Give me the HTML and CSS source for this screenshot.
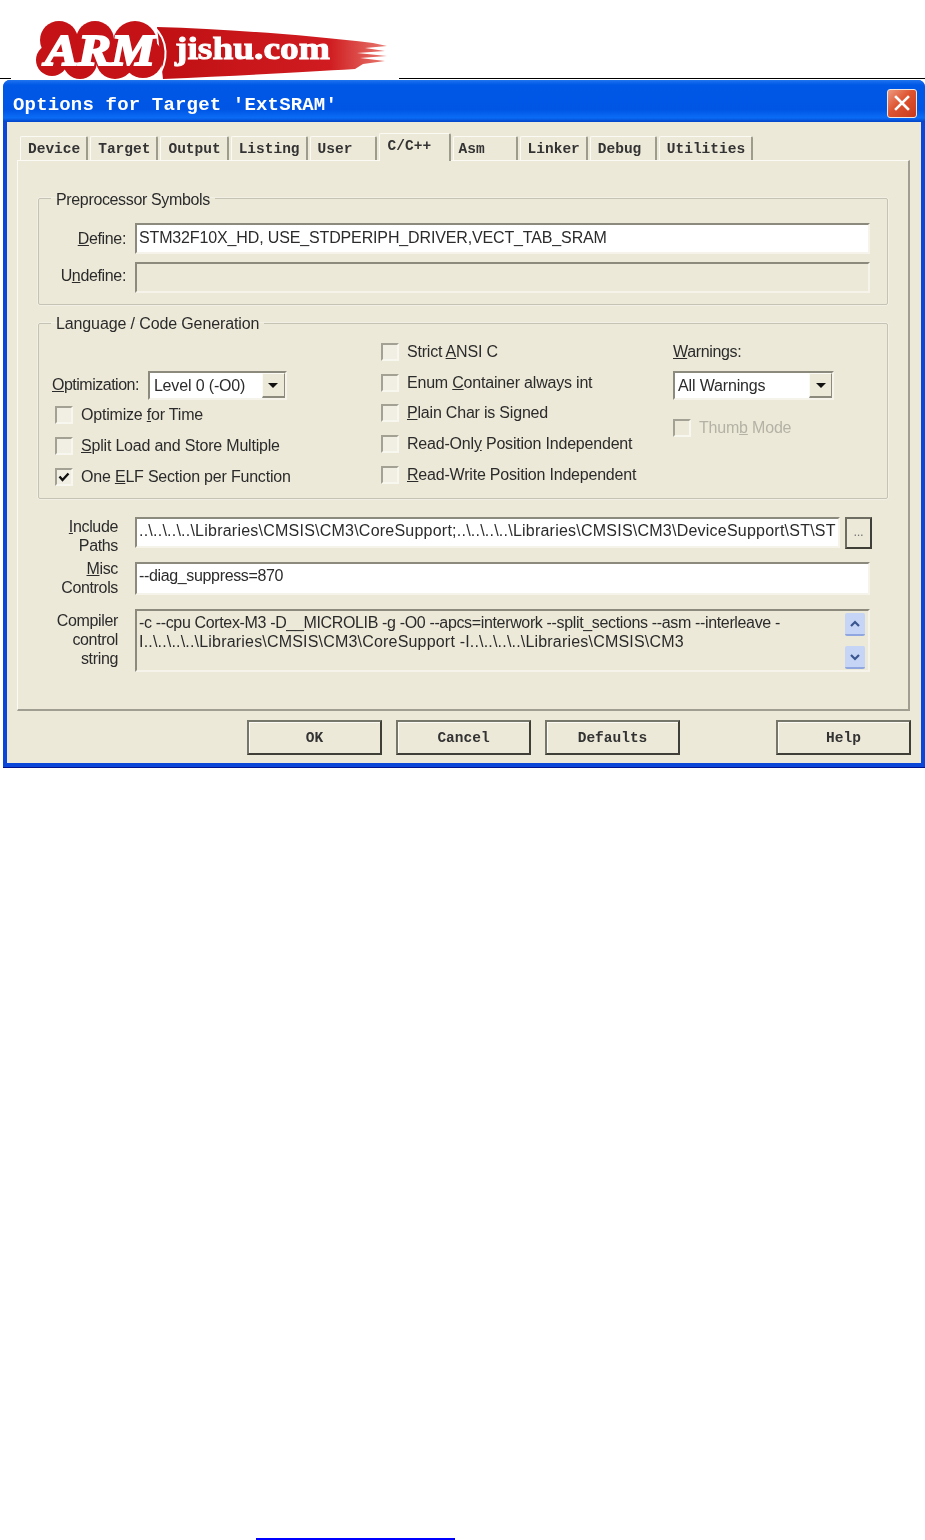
FILE: index.html
```html
<!DOCTYPE html>
<html lang="en">
<head>
    <meta charset="UTF-8">
    <title>Options for Target 'ExtSRAM'</title>
    <link rel="stylesheet" href="styles.css">
</head>
<body>
    <header class="page-head">
        <div class="rule rule-left"></div>
        <div class="logo-cell">
            <svg class="logo" width="353" height="59" viewBox="0 0 353 59">
                <defs>
                    <linearGradient id="swoosh" x1="0" y1="0" x2="1" y2="0">
                        <stop offset="0" stop-color="#c01014"/>
                        <stop offset="0.75" stop-color="#d01c20"/>
                        <stop offset="1" stop-color="#e87a70"/>
                    </linearGradient>
                </defs>
                <path d="M122 7 C190 9 270 15 338 23 L352 26 L330 28 L350 31 L322 33 L352 36 L325 38 L350 41 L328 44 L320 49 C270 52 200 56 128 59 Z" fill="url(#swoosh)"/>
                <g fill="#c41216">
                    <circle cx="24" cy="20" r="19"/>
                    <circle cx="17" cy="40" r="16"/>
                    <circle cx="60" cy="20" r="19"/>
                    <circle cx="100" cy="23" r="22"/>
                    <circle cx="45" cy="42" r="17"/>
                    <circle cx="80" cy="40" r="19"/>
                    <circle cx="108" cy="38" r="20"/>
                </g>
                <path d="M118 6 C134 20 134 42 122 58" fill="none" stroke="#fff" stroke-width="2"/>
                <text class="logo-arm" x="10" y="45" textLength="110" lengthAdjust="spacingAndGlyphs">ARM</text>
                <text class="logo-site" x="140" y="39" textLength="155" lengthAdjust="spacingAndGlyphs">jishu.com</text>
            </svg>
        </div>
        <div class="rule rule-right"></div>
    </header>

    <section class="dialog">
        <div class="titlebar">
            <span class="title">Options for Target 'ExtSRAM'</span>
            <span class="close">
                <svg width="16" height="16" viewBox="0 0 16 16"><path d="M2 2 L14 14 M14 2 L2 14" stroke="#fff" stroke-width="2.6" stroke-linecap="square"/></svg>
            </span>
        </div>

        <div class="dialog-body">
            <nav class="tabs">
                <span class="tab">Device</span>
                <span class="tab">Target</span>
                <span class="tab">Output</span>
                <span class="tab">Listing</span>
                <span class="tab">User</span>
                <span class="tab tab-active">C/C++</span>
                <span class="tab tab-asm">Asm</span>
                <span class="tab">Linker</span>
                <span class="tab">Debug</span>
                <span class="tab">Utilities</span>
            </nav>

            <div class="panel">
                <fieldset class="group">
                    <legend>Preprocessor Symbols</legend>
                    <div class="symbols">
                        <label class="sym-label"><u>D</u>efine:</label>
                        <div class="field field-define">STM32F10X_HD, USE_STDPERIPH_DRIVER,VECT_TAB_SRAM</div>
                        <label class="sym-label label-up">U<u>n</u>define:</label>
                        <div class="field field-off"></div>
                    </div>
                </fieldset>

                <fieldset class="group group-lang">
                    <legend>Language / Code Generation</legend>
                    <div class="lang">
                        <div class="lang-col col-opt">
                            <div class="opt-row">
                                <label><u>O</u>ptimization:</label>
                                <div class="combo combo-opt">
                                    <span class="combo-text">Level 0 (-O0)</span>
                                    <span class="combo-btn"><i></i></span>
                                </div>
                            </div>
                            <div class="check"><span class="box"></span><span>Optimize <u>f</u>or Time</span></div>
                            <div class="check"><span class="box"></span><span><u>S</u>plit Load and Store Multiple</span></div>
                            <div class="check">
                                <span class="box"><svg width="12" height="12" viewBox="0 0 12 12"><path d="M1.5 5.5 L4.5 9 L10.5 2.5" fill="none" stroke="#111" stroke-width="2.4"/></svg></span>
                                <span>One <u>E</u>LF Section per Function</span>
                            </div>
                        </div>
                        <div class="lang-col col-flags">
                            <div class="check"><span class="box"></span><span>Strict <u>A</u>NSI C</span></div>
                            <div class="check"><span class="box"></span><span>Enum <u>C</u>ontainer always int</span></div>
                            <div class="check"><span class="box"></span><span><u>P</u>lain Char is Signed</span></div>
                            <div class="check"><span class="box"></span><span>Read-Onl<u>y</u> Position Independent</span></div>
                            <div class="check"><span class="box"></span><span><u>R</u>ead-Write Position Independent</span></div>
                        </div>
                        <div class="lang-col col-warn">
                            <label class="warn-label"><u>W</u>arnings:</label>
                            <div class="combo combo-warn">
                                <span class="combo-text">All Warnings</span>
                                <span class="combo-btn"><i></i></span>
                            </div>
                            <div class="check check-off"><span class="box"></span><span>Thum<u>b</u> Mode</span></div>
                        </div>
                    </div>
                </fieldset>

                <div class="rows">
                    <label class="row-label label-low"><u>I</u>nclude<br>Paths</label>
                    <div class="include-row">
                        <div class="field field-clip">..\..\..\..\Libraries\CMSIS\CM3\CoreSupport;..\..\..\..\Libraries\CMSIS\CM3\DeviceSupport\ST\ST</div>
                        <span class="dots">...</span>
                    </div>
                    <label class="row-label"><u>M</u>isc<br>Controls</label>
                    <div class="field field-misc">--diag_suppress=870</div>
                    <label class="row-label">Compiler<br>control<br>string</label>
                    <div class="field field-off field-string">
                        <div class="string-text">-c --cpu Cortex-M3 -D__MICROLIB -g -O0 --apcs=interwork --split_sections --asm --interleave -<br><span class="string-wide">I..\..\..\..\Libraries\CMSIS\CM3\CoreSupport -I..\..\..\..\Libraries\CMSIS\CM3</span></div>
                        <div class="scroll">
                            <span class="scroll-btn"><svg width="12" height="10" viewBox="0 0 12 10"><path d="M2 7 L6 3 L10 7" fill="none" stroke="#3a5590" stroke-width="2.2"/></svg></span>
                            <span class="scroll-btn"><svg width="12" height="10" viewBox="0 0 12 10"><path d="M2 3 L6 7 L10 3" fill="none" stroke="#3a5590" stroke-width="2.2"/></svg></span>
                        </div>
                    </div>
                </div>
            </div>

            <div class="actions">
                <button>OK</button>
                <button>Cancel</button>
                <button>Defaults</button>
                <button class="help">Help</button>
            </div>
        </div>
    </section>

    <footer class="page-foot"><a class="foot-link"></a></footer>
</body>
</html>
```

FILE: styles.css
```css
* {
    box-sizing: border-box;
}
html, body {
    margin: 0;
    background: #fff;
}
body {
    width: 925px;
    height: 1540px;
    overflow: hidden;
    display: flex;
    flex-direction: column;
    font-family: "Liberation Sans", Arial, sans-serif;
    font-size: 16px;
    letter-spacing: -0.35px;
    color: #2b2b2b;
}

/* page header */
.page-head {
    display: flex;
    height: 80px;
    flex: none;
}
.rule {
    height: 79px;
    border-bottom: 1px solid #000;
}
.rule-left {
    width: 11px;
}
.rule-right {
    flex: 1;
}
.logo-cell {
    width: 388px;
    padding: 20px 0 0 24px;
}
.logo {
    display: block;
    filter: blur(0.5px);
}
.logo-arm {
    font-family: "Liberation Serif", serif;
    font-weight: bold;
    font-style: italic;
    font-size: 44px;
    letter-spacing: 0;
    fill: #fff;
    stroke: #fff;
    stroke-width: 2px;
}
.logo-site {
    font-family: "Liberation Serif", serif;
    font-weight: bold;
    font-size: 31px;
    letter-spacing: 0;
    fill: #fff;
    stroke: #fff;
    stroke-width: 0.9px;
}

/* dialog */
.dialog {
    margin-left: 3px;
    width: 922px;
    height: 688px;
    flex: none;
    display: flex;
    flex-direction: column;
    background: #0a46d8;
    border-radius: 7px 7px 0 0;
    padding: 0 4px 4px;
    filter: blur(0.6px);
    border-bottom: 1px solid #00138c;
}
.titlebar {
    height: 42px;
    flex: none;
    margin: 0 -4px;
    padding: 0 8px 0 10px;
    display: flex;
    align-items: center;
    justify-content: space-between;
    border-radius: 7px 7px 0 0;
    background: linear-gradient(#1f74ee 0, #0058e6 12%, #0055e5 70%, #0a6cf5 90%, #0244c8 100%);
}
.title {
    margin-top: 7px;
    font-family: "Liberation Mono", monospace;
    font-weight: bold;
    font-size: 19px;
    letter-spacing: 0.17px;
    color: #fff;
    white-space: pre;
}
.close {
    width: 30px;
    height: 29px;
    margin-top: 4px;
    display: flex;
    align-items: center;
    justify-content: center;
    border: 1px solid #f0e8e0;
    border-radius: 3px;
    background: linear-gradient(135deg, #ec9a80, #de5430 45%, #c8391c);
}
.dialog-body {
    flex: 1;
    background: #ece9d8;
    padding: 10px 11px 0 10px;
}

/* tabs */
.tabs {
    display: flex;
    align-items: flex-end;
    gap: 2px;
    height: 28px;
    padding-left: 3px;
    font-family: "Liberation Mono", monospace;
    font-weight: bold;
    font-size: 14.5px;
    letter-spacing: 0;
    color: #333;
}
.tab {
    min-width: 67px;
    height: 24px;
    padding: 4px 6px 0 7px;
    background: #ece9d8;
    border-top: 1px solid #fbfaf4;
    border-left: 1px solid #fbfaf4;
    border-right: 2px solid #9d9b8c;
    border-radius: 2px 2px 0 0;
}
.tab-active {
    height: 28px;
    width: 72px;
    padding: 4px 8px 0 8px;
    position: relative;
    top: 1px;
    z-index: 1;
}
.tab-asm {
    min-width: 65px;
    padding-left: 5px;
}

/* main panel */
.panel {
    height: 551px;
    background: #ece9d8;
    border-top: 1px solid #fbfaf4;
    border-left: 1px solid #fbfaf4;
    border-right: 2px solid #a09e90;
    border-bottom: 2px solid #a09e90;
    padding: 28px 20px 0 20px;
}
.group {
    margin: 0;
    padding: 16px 17px 11px 0;
    min-width: 0;
    border: 1px solid #c5c3b3;
    border-radius: 2px;
    box-shadow: 0 0 0 0.5px #f8f7f0;
}
.group legend {
    margin-left: 12px;
    padding: 0 5px;
    height: 18px;
    line-height: 21px;
}
.group-lang {
    margin-top: 9px;
    padding: 0 0 12px;
}
.group-lang legend {
    line-height: 19px;
    letter-spacing: -0.12px;
}
.symbols {
    display: grid;
    grid-template-columns: 87px 1fr;
    column-gap: 9px;
    row-gap: 8px;
    grid-auto-rows: 31px;
    align-items: center;
}
.sym-label {
    text-align: right;
}
.label-up {
    margin-top: -4px;
}
.field {
    height: 31px;
    line-height: 25px;
    padding-left: 2px;
    background: #fff;
    border-top: 2px solid #8c8a7c;
    border-left: 2px solid #8c8a7c;
    border-bottom: 2px solid #f6f4ea;
    border-right: 2px solid #f6f4ea;
    white-space: nowrap;
}
.field-define {
    letter-spacing: -0.14px;
}
.field-off {
    background: #ece9d8;
}
.field-clip {
    flex: 1;
    min-width: 0;
    overflow: hidden;
    line-height: 23px;
    letter-spacing: 0.23px;
}
.field-misc {
    height: 33px;
    line-height: 23px;
}
.field-string {
    height: 63px;
    display: flex;
    justify-content: space-between;
    padding-right: 3px;
}
.string-text {
    line-height: 19px;
    padding-top: 2px;
}
.string-wide {
    letter-spacing: 0.19px;
}

/* language group */
.lang {
    display: grid;
    grid-template-columns: 329px 292px 1fr;
    margin-left: 13px;
}
.lang-col {
    display: flex;
    flex-direction: column;
}
.check {
    display: flex;
    align-items: center;
    gap: 8px;
    height: 18px;
    white-space: nowrap;
    letter-spacing: -0.2px;
}
.box {
    width: 18px;
    height: 18px;
    flex: none;
    display: flex;
    align-items: center;
    justify-content: center;
    background: #f1efe3;
    border-top: 2px solid #a3a193;
    border-left: 2px solid #a3a193;
    border-bottom: 2px solid #f8f7ef;
    border-right: 2px solid #f8f7ef;
}
.col-opt {
    padding-top: 39px;
    gap: 13px;
}
.col-opt .check {
    margin-left: 3px;
}
.opt-row {
    display: flex;
    align-items: center;
    gap: 9px;
    margin-bottom: -7px;
}
.opt-row label {
    margin-top: -2px;
    letter-spacing: -0.5px;
}
.col-flags {
    padding-top: 11px;
    gap: 12.7px;
}
.col-warn {
    padding-top: 10px;
}
.warn-label {
    height: 18px;
    line-height: 20px;
}
.combo {
    height: 29px;
    margin-top: 11px;
    display: flex;
    align-items: center;
    justify-content: space-between;
    background: #fff;
    border-top: 2px solid #8c8a7c;
    border-left: 2px solid #8c8a7c;
    border-bottom: 2px solid #f6f4ea;
    border-right: 2px solid #f6f4ea;
    padding-left: 3px;
    letter-spacing: -0.15px;
}
.combo-opt {
    width: 139px;
    margin-top: 0;
    padding-left: 4px;
}
.combo-warn {
    width: 161px;
}
.combo-btn {
    width: 23px;
    height: 25px;
    display: flex;
    align-items: center;
    justify-content: center;
    background: #ece9d8;
    border-top: 1px solid #fbfaf4;
    border-left: 1px solid #fbfaf4;
    border-right: 1px solid #8c8a7c;
    border-bottom: 2px solid #8c8a7c;
}
.combo-btn i {
    width: 0;
    height: 0;
    border: 5px solid transparent;
    border-top: 5px solid #111;
    border-bottom: 0;
}
.check-off {
    margin-top: 19px;
    color: #b4b2a5;
}
.check-off .box {
    background: #ece9d8;
}

/* lower rows */
.rows {
    display: grid;
    grid-template-columns: 100px 735px;
    grid-template-rows: 31px 33px 63px;
    column-gap: 17px;
    row-gap: 14px;
    margin-top: 18px;
    margin-left: -20px;
    align-items: center;
}
.row-label {
    margin-top: -2px;
    text-align: right;
    line-height: 19px;
}
.label-low {
    padding-top: 8px;
}
.include-row {
    display: flex;
    gap: 5px;
    margin-right: -2px;
}
.dots {
    width: 27px;
    height: 32px;
    flex: none;
    font-size: 13px;
    line-height: 26px;
    text-align: center;
    color: #777;
    background: #ece9d8;
    border: 2px solid #3f3f38;
    border-top-color: #6e6d62;
    border-left-color: #6e6d62;
}
.scroll {
    display: flex;
    flex-direction: column;
    justify-content: space-between;
    height: 56px;
    margin-top: 2px;
}
.scroll-btn {
    width: 20px;
    height: 23px;
    display: flex;
    align-items: center;
    justify-content: center;
    background: #c6d4f5;
    border-bottom: 2px solid #8fa6e0;
    border-radius: 2px;
}

/* buttons */
.actions {
    display: flex;
    gap: 14px;
    padding: 9px 0 0 230px;
}
.actions button {
    width: 135px;
    height: 35px;
    padding: 0;
    font-family: "Liberation Mono", monospace;
    font-weight: bold;
    font-size: 14.5px;
    letter-spacing: 0;
    color: #333;
    background: #ece9d8;
    border: 2px solid #3f3f38;
    border-top: 2px solid #77766a;
    border-left: 2px solid #77766a;
    box-shadow: inset 1px 1px 0 #fbfaf4;
}
.actions .help {
    margin-left: auto;
    margin-right: -1px;
}

/* page footer */
.page-foot {
    margin-top: auto;
    padding-left: 256px;
}
.foot-link {
    display: block;
    width: 199px;
    height: 2px;
    background: #00f;
}
```
